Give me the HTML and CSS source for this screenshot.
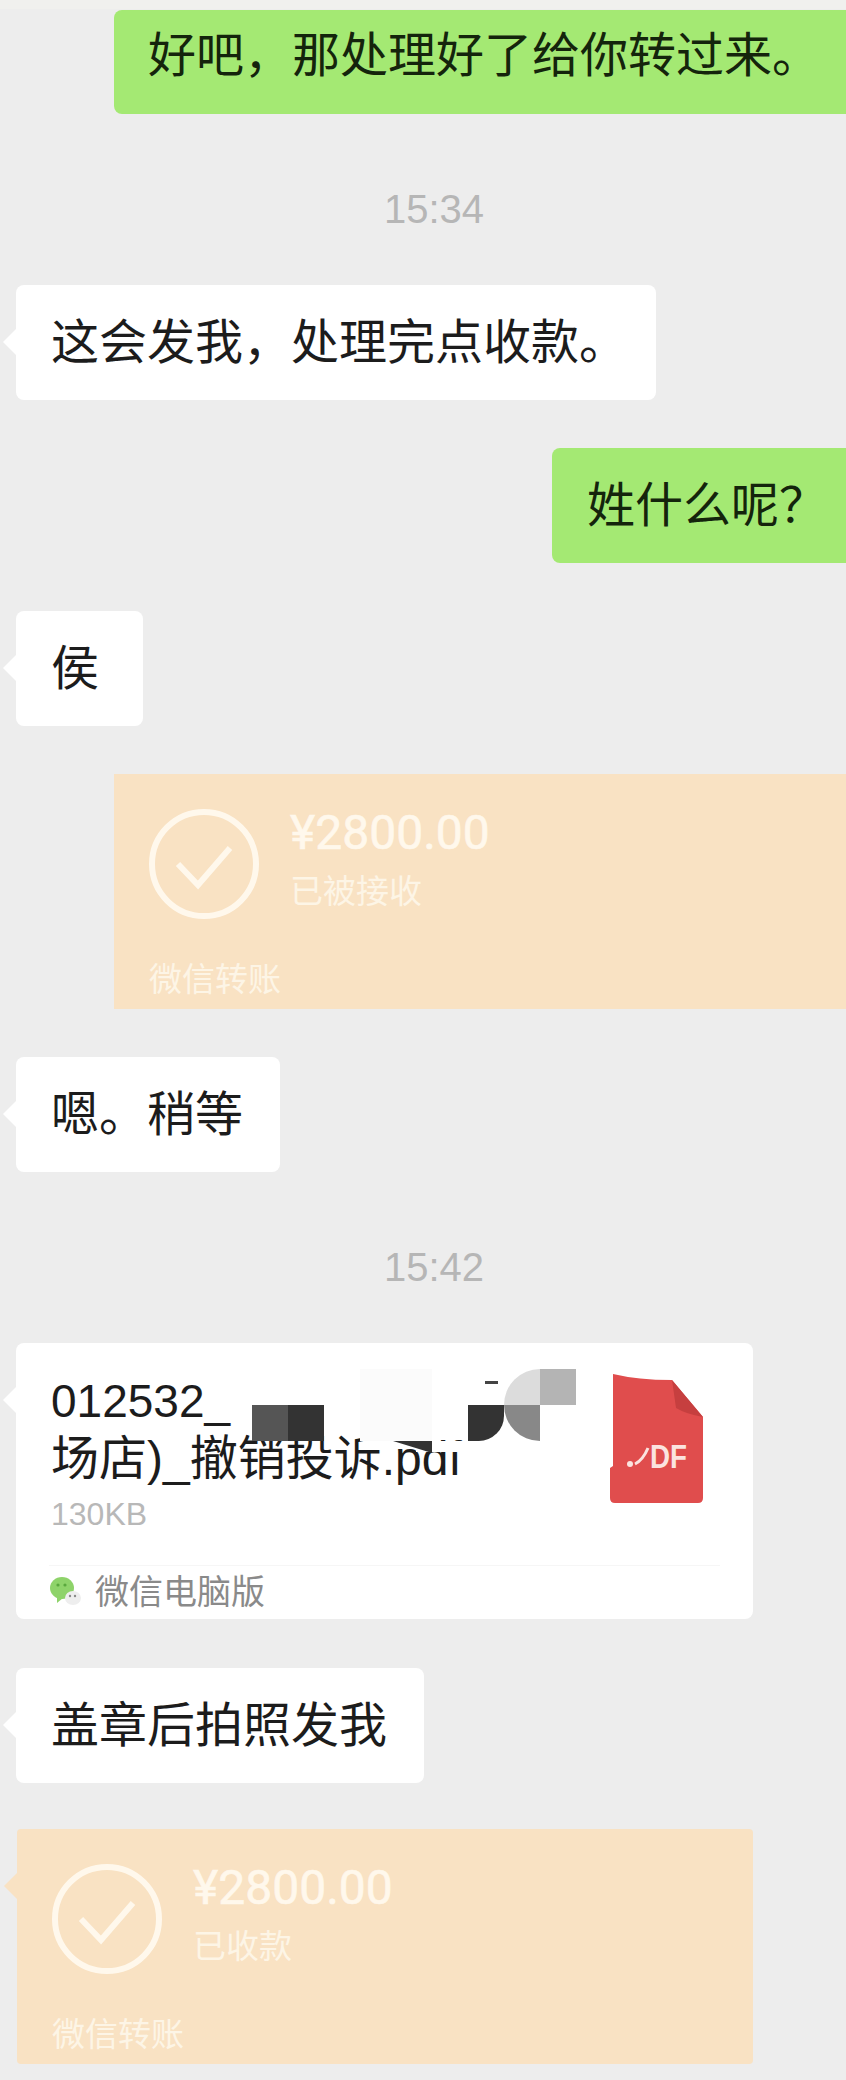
FILE: index.html
```html
<!DOCTYPE html>
<html lang="zh-CN">
<head>
    <meta charset="UTF-8">
    <meta name="viewport" content="width=device-width, initial-scale=1.0">
    <title>聊天记录</title>
    <link rel="stylesheet" href="styles.css">
</head>
<body>
    <div class="chat">
        <div class="edge"></div>
        <div class="msg me first">好吧，那处理好了给你转过来。</div>

        <div class="time">15:34</div>

        <div class="msg other fit">这会发我，处理完点收款。</div>
        <div class="msg me short">姓什么呢？</div>
        <div class="msg other single">侯</div>

        <div class="transfer right">
            <div class="transfer-row">
                <svg class="check" viewBox="0 0 110 110">
                    <circle cx="55" cy="55" r="52"></circle>
                    <polyline points="29,55 49,76 81,39"></polyline>
                </svg>
                <div>
                    <div class="amount">¥2800.00</div>
                    <div class="status">已被接收</div>
                </div>
            </div>
            <div class="transfer-foot">微信转账</div>
        </div>

        <div class="msg other">嗯。稍等</div>

        <div class="time">15:42</div>

        <div class="file">
            <div class="file-body">
                <div class="file-info">
                    <div class="file-name"><span class="file-code">012532_</span><br>场店)_撤销投诉.pdf</div>
                    <div class="file-size">130KB</div>
                </div>
                <svg class="pdf" viewBox="0 0 93 129">
                    <path class="pdf-page" d="M3 0 Q28 6 62 6 L93 43 V124 Q93 129 88 129 H5 Q0 129 0 124 V94 L3 92 Z"></path>
                    <path class="pdf-fold" d="M62 6 L93 43 Q76 40 66 34 Z"></path>
                    <circle class="pdf-mark" cx="20" cy="90" r="3"></circle>
                    <path class="pdf-slash" d="M25 90 Q33 86 38 74"></path>
                    <text class="pdf-text" x="40" y="94" textLength="37" lengthAdjust="spacingAndGlyphs">DF</text>
                </svg>
            </div>
            <div class="file-foot">
                <svg class="wx" viewBox="0 0 32 32">
                    <ellipse class="wx-big" cx="13" cy="12" rx="12" ry="11"></ellipse>
                    <path class="wx-big" d="M8 20 L8 27 L14 22 Z"></path>
                    <circle class="wx-eye" cx="9" cy="9" r="1.6"></circle>
                    <circle class="wx-eye" cx="16" cy="9" r="1.6"></circle>
                    <ellipse class="wx-small" cx="24" cy="22" rx="8" ry="7"></ellipse>
                    <circle class="wx-dot" cx="21" cy="20" r="1.2"></circle>
                    <circle class="wx-dot" cx="26" cy="20" r="1.2"></circle>
                </svg>
                <span>微信电脑版</span>
            </div>

            <!-- pixelated cover over the file name -->
            <div class="mosaic">
                <i></i><i></i><i></i><i class="m-pale"></i><i class="m-pale"></i><i></i><i></i><i class="m-light round-tl"></i><i class="m-silver"></i>
                <i class="m-grey"></i><i class="m-dark"></i><i></i><i class="m-pale"></i><i class="m-pale"></i><i></i><i class="m-dark round-br"></i><i class="m-mid round-bl"></i><i class="m-white"></i>
            </div>
            <div class="cover-top"></div>
            <div class="cover-end"></div>
            <div class="wedge"></div>
            <div class="speck"></div>
        </div>

        <div class="msg other seal">盖章后拍照发我</div>

        <div class="transfer left">
            <div class="transfer-row">
                <svg class="check" viewBox="0 0 110 110">
                    <circle cx="55" cy="55" r="52"></circle>
                    <polyline points="29,55 49,76 81,39"></polyline>
                </svg>
                <div>
                    <div class="amount">¥2800.00</div>
                    <div class="status">已收款</div>
                </div>
            </div>
            <div class="transfer-foot">微信转账</div>
        </div>
    </div>
</body>
</html>
```

FILE: styles.css
```css
body {
    margin: 0;
    background-color: #ededed;
    font-family: "Liberation Sans", "Noto Sans CJK SC", sans-serif;
    color: #1c1c1c;
}
.chat {
    display: flex;
    flex-direction: column;
    align-items: flex-start;
    height: 2080px;
    overflow: hidden;
}
.edge {
    align-self: stretch;
    height: 9px;
    margin-bottom: 1px;
    background-color: #f0f0ee;
}
.msg {
    position: relative;
    margin-top: 48px;
    padding: 32px 37px 32px 35px;
    font-size: 48px;
    line-height: 51px;
    border-radius: 8px;
    white-space: nowrap;
}
.other {
    margin-left: 16px;
    background-color: #fff;
}
.other::before,
.transfer.left::before,
.file::before {
    content: "";
    position: absolute;
    left: -13px;
    top: 44px;
    border-style: solid;
    border-width: 13px 13px 13px 0;
    border-color: transparent #fff transparent transparent;
}
.me {
    align-self: flex-end;
    background-color: #a4e973;
    color: #14240c;
    border-radius: 8px 0 0 8px;
}
.first {
    margin-top: 0;
    padding: 20px 26px 33px 34px;
}
.short {
    padding-right: 19px;
}
.fit {
    padding-right: 29px;
}
.single {
    padding-right: 44px;
}
.seal {
    margin-top: 49px;
}
.time {
    align-self: center;
    margin: 65px 0 46px 22px;
    font-size: 40px;
    line-height: 60px;
    color: #b6b6b6;
}
.time + .msg {
    margin-top: 0;
}

/* transfer cards */
.transfer {
    position: relative;
    box-sizing: border-box;
    height: 235px;
    padding: 35px 35px 0;
    background-color: #f9e2c3;
    color: #fdf5e6;
}
.transfer.right {
    align-self: flex-end;
    width: 732px;
    margin-top: 48px;
}
.transfer.left {
    width: 736px;
    margin: 46px 0 0 17px;
    border-radius: 4px;
}
.transfer.left::before {
    top: 44px;
    border-right-color: #f9e2c3;
}
.transfer-row {
    display: flex;
    gap: 31px;
}
.check {
    width: 110px;
    height: 110px;
    fill: none;
    stroke: #fff8ec;
    stroke-width: 6;
}
.amount {
    font-family: Roboto, "Liberation Sans", sans-serif;
    font-size: 48px;
    line-height: 48px;
    color: #fff8ec;
    -webkit-text-stroke: 0.6px #fff8ec;
}
.status {
    margin-top: 15px;
    font-size: 33px;
    line-height: 40px;
}
.transfer-foot {
    margin-top: 41px;
    font-size: 33px;
    line-height: 40px;
}

/* file card */
.file {
    position: relative;
    box-sizing: border-box;
    width: 737px;
    height: 276px;
    margin-left: 16px;
    padding: 29px 33px 0 35px;
    background-color: #fff;
    border-radius: 8px;
}
.file-body {
    display: flex;
    justify-content: space-between;
    align-items: flex-start;
}
.file-name {
    font-size: 48px;
    line-height: 58px;
}
.file-code {
    font-size: 46px;
}
.file-size {
    margin-top: 6px;
    font-size: 32px;
    line-height: 40px;
    color: #b8b8b8;
}
.pdf {
    width: 93px;
    height: 129px;
    margin: 2px 17px 0 0;
}
.pdf-page {
    fill: #e04d4d;
}
.pdf-fold {
    fill: #c63f3f;
}
.pdf-mark {
    fill: #fbe3df;
}
.pdf-slash {
    fill: none;
    stroke: #fbe3df;
    stroke-width: 3;
}
.pdf-text {
    fill: #fbe3df;
    font-size: 34px;
    font-weight: bold;
}
.file-foot {
    display: flex;
    align-items: center;
    gap: 14px;
    margin: 31px 0 0 -2px;
    padding-top: 6px;
    border-top: 1px solid #f6f6f6;
    font-size: 34px;
    line-height: 40px;
    color: #8a8a8a;
}
.wx {
    width: 32px;
    height: 32px;
}
.wx-big {
    fill: #8ed36a;
}
.wx-eye {
    fill: #5aa83e;
}
.wx-small {
    fill: #eeeeee;
}
.wx-dot {
    fill: #8a8a8a;
}
.mosaic {
    position: absolute;
    left: 236px;
    top: 26px;
    display: grid;
    grid-template-columns: repeat(9, 36px);
    grid-auto-rows: 36px;
}
.m-pale {
    background-color: #fbfbfb;
}
.m-light {
    background-color: #dcdcdc;
}
.m-silver {
    background-color: #b4b4b4;
}
.m-mid {
    background-color: #888;
}
.m-grey {
    background-color: #555;
}
.m-dark {
    background-color: #333;
}
.m-white {
    background-color: #fff;
}
.round-tl {
    border-top-left-radius: 100%;
}
.round-bl {
    border-bottom-left-radius: 100%;
}
.round-br {
    border-bottom-right-radius: 70%;
}
.cover-top {
    position: absolute;
    left: 400px;
    top: 98px;
    width: 60px;
    height: 11px;
    background-color: #fff;
}
.cover-end {
    position: absolute;
    left: 448px;
    top: 98px;
    width: 100px;
    height: 50px;
    background-color: #fff;
}
.wedge {
    position: absolute;
    left: 377px;
    top: 98px;
    width: 39px;
    height: 12px;
    background-color: #333;
    clip-path: polygon(0 0, 100% 0, 100% 100%);
}
.speck {
    position: absolute;
    left: 469px;
    top: 38px;
    width: 13px;
    height: 3px;
    background-color: #444;
}
```
